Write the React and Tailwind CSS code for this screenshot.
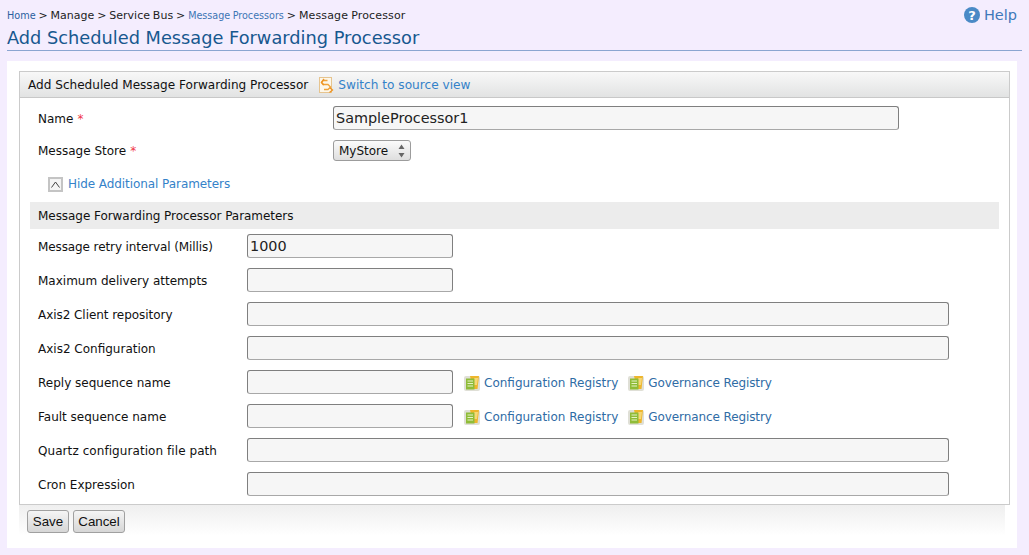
import React from 'react';

const dejavu = "font-['DejaVu_Sans',sans-serif]";

const rows = [
  { label: 'Message retry interval (Millis)', value: '1000', short: true, labelClass: 'tracking-[-0.1px]' },
  { label: 'Maximum delivery attempts', short: true },
  { label: 'Axis2 Client repository', labelClass: 'tracking-[-0.05px]' },
  { label: 'Axis2 Configuration' },
  { label: 'Reply sequence name', short: true, registry: true },
  { label: 'Fault sequence name', short: true, registry: true },
  { label: 'Quartz configuration file path', labelClass: 'tracking-[0.07px]' },
  { label: 'Cron Expression' },
];

const Star = () => <span className="text-[#f0384a] ml-[4px]">*</span>;

const SourceIcon = () => (
  <svg width="16" height="17" viewBox="0 0 16 17" fill="none">
    <rect x="0.5" y="0.5" width="12" height="15" fill="#fdf7ea" stroke="#e6c48f" />
    <path d="M8.5 3.5H4L2.5 5.5 4 7.5H9L11.5 10 9 12.5H5" stroke="#f0a238" strokeWidth="1.3" />
    <path d="M5 2 2.5 5.5 5 8M10.5 10.5 13.5 13 10.5 15.5" stroke="#ee9322" strokeWidth="1.3" />
  </svg>
);

const RegistryIcon = () => (
  <svg width="16" height="16" viewBox="0 0 16 16" fill="none" className="shrink-0">
    <rect x="0" y="1" width="16" height="15" rx="2" fill="#dfdfd6" />
    <path d="M6 1h9l-1.5 13H9z" fill="#eeb62c" />
    <path d="M10 3h4l-1 7h-3z" fill="#f7d774" />
    <rect x="2" y="3.5" width="8.5" height="11" fill="#8fbc38" />
    <path d="M3.5 6h5.5M3.5 8.5h5.5M3.5 11h5.5" stroke="#e6f2c5" strokeWidth="1.2" />
  </svg>
);

const TextInput = ({ value, className }) => (
  <input
    readOnly
    value={value || ''}
    className={`h-[24px] bg-[#f6f6f6] border border-[#7f7f7f] border-b-[#a8a8a8] rounded-[3px] px-[2px] text-[14.4px] text-[#222] outline-none ${dejavu} ${className}`}
  />
);

const RegistryLink = ({ label, className }) => (
  <a className={`flex items-center gap-[4px] text-[#2f6ca5] whitespace-nowrap ${className || ''}`}>
    <RegistryIcon />
    {label}
  </a>
);

export default function App() {
  return (
    <div className={`h-[555px] w-[1029px] overflow-hidden bg-[#f4edfe] px-[7px] text-[12px] text-[#111] ${dejavu}`}>
      <div className="flex justify-between h-[28px] pt-[8px] leading-[15px] text-[11px]">
        <div className="text-[#1d1d1d] [word-spacing:-0.6px]">
          <a className="text-[#2a5f9e] text-[9.7px]">Home</a> &gt; Manage &gt; Service Bus &gt;{' '}
          <a className="text-[#3d75b5] text-[9.6px]">Message Processors</a> &gt;{' '}
          <span className="tracking-[0.15px]">Message Processor</span>
        </div>
        <a className="flex items-center gap-[4px] text-[14.5px] text-[#3f78ba] mr-[5px] -mt-[2px] h-[18px]">
          <span className="w-[16px] h-[16px] rounded-full bg-[#4a8ac6] text-white text-[13px] font-bold flex items-center justify-center leading-none">?</span>
          Help
        </a>
      </div>
      <h1 className="h-[23px] border-b border-[#8ba5d1] text-[17.77px] leading-[20px] font-normal text-[#17588f] whitespace-nowrap">
        Add Scheduled Message Forwarding Processor
      </h1>
      <div className="mt-[10px] w-[1010px] h-[487px] bg-white pt-[10px] pl-[12px]">
        <div className="w-[991px] h-[434px] border border-[#cbcbcb]">
          <div className="flex items-center h-[26px] border-b border-[#c8c8c8] bg-gradient-to-b from-[#f8f8f8] to-[#e2e3e3] pl-[8px] pt-[2px] gap-[11px]">
            <span className="text-[12.09px]">Add Scheduled Message Forwarding Processor</span>
            <a className="flex items-center gap-[3px] text-[#3482c9] text-[12.15px]">
              <SourceIcon />
              Switch to source view
            </a>
          </div>
          <div className="pt-[8px] px-[10px]">
            <div className="flex items-center h-[24px] pl-[8px]">
              <label className="w-[295px] pt-[2px]">Name<Star /></label>
              <TextInput value="SampleProcessor1" className="w-[566px]" />
            </div>
            <div className="flex items-center h-[21px] mt-[10px] pl-[8px]">
              <label className="w-[295px]">Message Store<Star /></label>
              <div className="relative flex items-center w-[78px] h-[21px] pl-[5px] border border-[#9c9c9c] rounded-[3px] bg-gradient-to-b from-[#fbfbfb] to-[#dedede]">
                MyStore
                <svg width="7" height="14" viewBox="0 0 7 14" className="absolute right-[5px] top-[3px]">
                  <path d="M3.5 0.5 6.5 5H0.5zM0.5 9H6.5L3.5 13.5z" fill="#666" />
                </svg>
              </div>
            </div>
            <div className="flex items-center h-[16px] mt-[15px] ml-[18px] gap-[5px] text-[#3482c9] tracking-[-0.07px]">
              <span className="flex items-center justify-center w-[15px] h-[15px] border-2 border-[#c4c4c4] bg-[#f4f4f4]">
                <svg width="9" height="7" viewBox="0 0 9 7" fill="none">
                  <path d="M0.5 6.5 4.5 1 8.5 6.5" stroke="#444" strokeWidth="1" />
                </svg>
              </span>
              Hide Additional Parameters
            </div>
            <div className="flex items-center h-[27px] mt-[10px] pl-[8px] bg-[#ececec] tracking-[-0.05px]">Message Forwarding Processor Parameters</div>
            <div className="flex flex-col gap-[10px] mt-[5px] pl-[8px]">
              {rows.map((r) => (
                <div key={r.label} className="flex items-center h-[24px]">
                  <label className={`w-[209px] pt-[2px] whitespace-nowrap ${r.labelClass || ''}`}>{r.label}</label>
                  <TextInput value={r.value} className={r.short ? 'w-[206px]' : 'w-[702px]'} />
                  {r.registry && (
                    <div className="flex ml-[11px] gap-[10px] pt-[1px]">
                      <RegistryLink label="Configuration Registry" />
                      <RegistryLink label="Governance Registry" className="tracking-[-0.1px]" />
                    </div>
                  )}
                </div>
              ))}
            </div>
          </div>
        </div>
        <div className="flex gap-[4px] w-[986px] h-[31px] pt-[5px] pl-[8px] bg-gradient-to-b from-[#efefef] to-white">
          <button className="h-[23px] w-[42px] border border-[#a0a0a0] rounded-[3px] bg-gradient-to-b from-[#f5f5f5] to-[#d6d6d6] font-['Liberation_Sans',sans-serif] text-[13.33px] text-[#111]">Save</button>
          <button className="h-[23px] w-[52px] border border-[#a0a0a0] rounded-[3px] bg-gradient-to-b from-[#f5f5f5] to-[#d6d6d6] font-['Liberation_Sans',sans-serif] text-[13.33px] text-[#111]">Cancel</button>
        </div>
      </div>
    </div>
  );
}
